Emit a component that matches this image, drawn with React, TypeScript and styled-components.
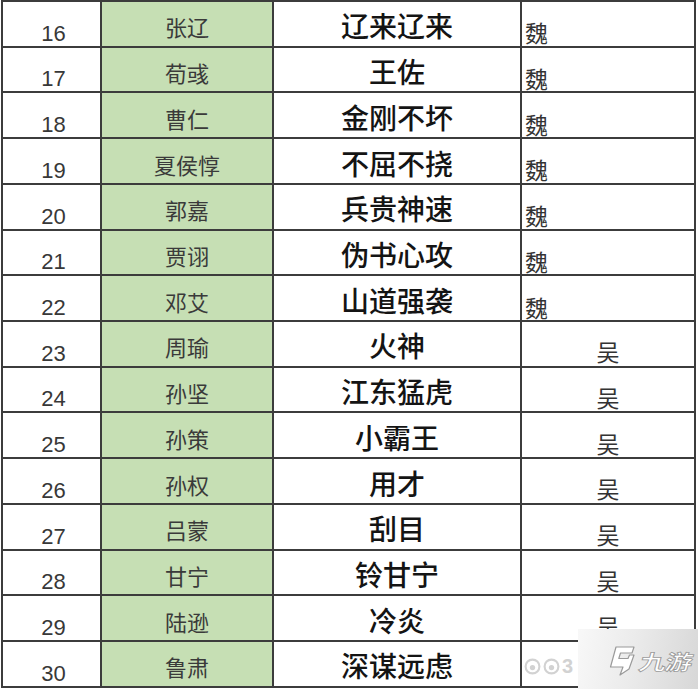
import React from "react";
import styled, { createGlobalStyle } from "styled-components";

const Global = createGlobalStyle`
  html, body { margin: 0; padding: 0; background: #ffffff; }
  body { width: 698px; height: 689px; overflow: hidden; }
`;

const Page = styled.div`
  position: relative;
  width: 698px;
  height: 689px;
  overflow: hidden;
  background: #ffffff;
`;

const Table = styled.div`
  display: grid;
  grid-template-columns: 99px 172px 248px 174px;
  grid-auto-rows: 45.73px;
  margin-left: 1px;
  width: max-content;
  border-top: 2px solid #3c3c3c;
  border-left: 2px solid #3c3c3c;
`;

const BaseCell = styled.div`
  box-sizing: border-box;
  display: flex;
  border-right: 2px solid #3c3c3c;
  border-bottom: 2px solid #3c3c3c;
  line-height: 1;
  white-space: nowrap;
`;

const NumCell = styled(BaseCell)`
  align-items: flex-end;
  justify-content: center;
  padding: 0 0 1px 4px;
  font-family: "Liberation Sans", Arial, sans-serif;
  font-size: 22px;
  color: #383838;
`;

const NameCell = styled(BaseCell)`
  align-items: center;
  justify-content: center;
  padding-top: 5px;
  background: #c6dfb4;
  font-family: "Noto Sans CJK SC", sans-serif;
  font-size: 22px;
  color: #3a3a3a;
`;

const SkillCell = styled(BaseCell)`
  align-items: center;
  justify-content: center;
  padding-top: 3px;
  font-family: "Noto Sans CJK SC", sans-serif;
  font-weight: 500;
  font-size: 28px;
  color: #141414;
`;

const FactionCell = styled(BaseCell)<{ $wei: boolean }>`
  align-items: flex-end;
  justify-content: ${(p) => (p.$wei ? "flex-start" : "center")};
  padding: ${(p) => (p.$wei ? "0 0 0 3px" : "0 0 1px 0")};
  font-family: "Noto Sans CJK SC", sans-serif;
  font-size: 23px;
  line-height: 1.15;
  color: #333333;
`;

const Watermark = styled.div`
  position: absolute;
  left: 578px;
  top: 629px;
  right: 0;
  bottom: 0;
  display: flex;
  align-items: center;
  gap: 5px;
  padding: 4px 0 0 29px;
  background: linear-gradient(100deg, #f8f8f8 0%, #ebebeb 45%, #d7d7d7 100%);
`;

const LogoText = styled.span`
  display: inline-block;
  font-family: "Noto Sans CJK SC", sans-serif;
  font-weight: 700;
  font-size: 27px;
  line-height: 1;
  color: #ffffff;
  -webkit-text-stroke: 1px #9a9a9a;
  letter-spacing: -1px;
  transform: skewX(-14deg) scaleY(0.78);
`;

const FaintMark = styled.div`
  position: absolute;
  left: 524px;
  top: 655px;
  display: flex;
  align-items: center;
  gap: 2px;
  font-family: "Liberation Sans", Arial, sans-serif;
  font-weight: 700;
  font-size: 20px;
  color: #d2d2d2;
`;

type Row = [number, string, string, string];

const rows: Row[] = [
  [16, "张辽", "辽来辽来", "魏"],
  [17, "荀彧", "王佐", "魏"],
  [18, "曹仁", "金刚不坏", "魏"],
  [19, "夏侯惇", "不屈不挠", "魏"],
  [20, "郭嘉", "兵贵神速", "魏"],
  [21, "贾诩", "伪书心攻", "魏"],
  [22, "邓艾", "山道强袭", "魏"],
  [23, "周瑜", "火神", "吴"],
  [24, "孙坚", "江东猛虎", "吴"],
  [25, "孙策", "小霸王", "吴"],
  [26, "孙权", "用才", "吴"],
  [27, "吕蒙", "刮目", "吴"],
  [28, "甘宁", "铃甘宁", "吴"],
  [29, "陆逊", "冷炎", "吴"],
  [30, "鲁肃", "深谋远虑", "吴"],
];

const LogoMark = () => (
  <svg width="28" height="30" viewBox="0 0 28 30">
    <path
      d="M9 1 L27 1 L25 7 L13.5 7 L11.8 12.5 L21 12.5 L22.5 9 L27 9 L22 23 L13 29 L16 21 L3.5 21 Z"
      fill="#ffffff"
      stroke="#9a9a9a"
      strokeWidth="1.2"
      strokeLinejoin="round"
    />
  </svg>
);

const FaintIcon = () => (
  <svg width="17" height="17" viewBox="0 0 16 16">
    <circle cx="8" cy="8" r="6.5" fill="none" stroke="#d2d2d2" strokeWidth="2" />
    <circle cx="8" cy="9" r="2.5" fill="#d2d2d2" />
  </svg>
);

export default function App() {
  return (
    <Page>
      <Global />
      <Table>
        {rows.map(([n, name, skill, faction]) => (
          <React.Fragment key={n}>
            <NumCell>{n}</NumCell>
            <NameCell>{name}</NameCell>
            <SkillCell>{skill}</SkillCell>
            <FactionCell $wei={faction === "魏"}>{faction}</FactionCell>
          </React.Fragment>
        ))}
      </Table>
      <FaintMark>
        <FaintIcon />
        <FaintIcon />
        <span>3</span>
      </FaintMark>
      <Watermark>
        <LogoMark />
        <LogoText>九游</LogoText>
      </Watermark>
    </Page>
  );
}
